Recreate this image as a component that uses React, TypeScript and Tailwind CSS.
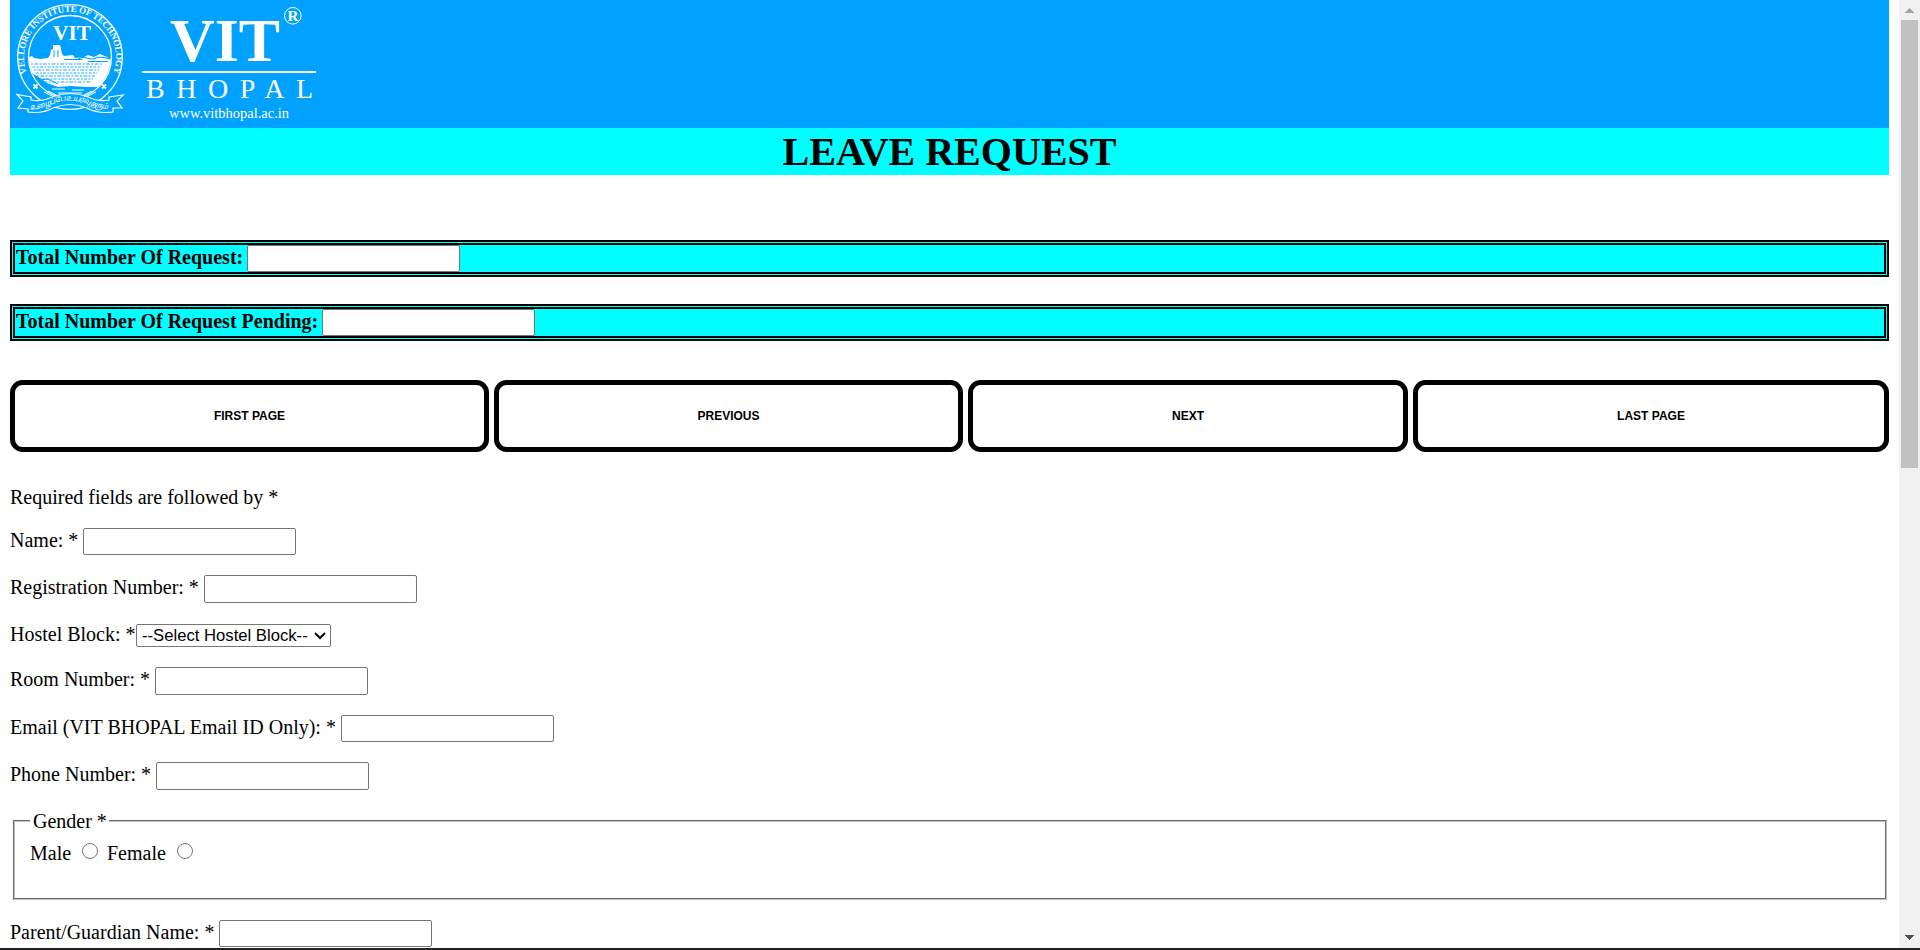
import React from 'react';

function Logo() {
  const rows = [64, 67, 70, 73, 76, 79, 82];
  return (
    <svg width="320" height="128" viewBox="10 0 320 128" className="block shrink-0">
      <defs>
        <path id="ringPath" d="M 26.6 73 A 46 46 0 1 1 113.4 73" />
        <path id="ribbonPath" d="M 30 109.5 Q 42 109 54 103.5 Q 70 97.5 86 103.5 Q 98 109 110 109.5" />
        <clipPath id="innerDisc"><circle cx="70" cy="57" r="41" /></clipPath>
      </defs>
      <g fill="none" stroke="#fff" strokeWidth="1.3">
        <circle cx="70" cy="57" r="52.3" />
        <circle cx="70" cy="57" r="41.5" />
      </g>
      <text fill="#fff" fontFamily="Liberation Serif, serif" fontWeight="700" fontSize="9">
        <textPath href="#ringPath" startOffset="0" textLength="175" lengthAdjust="spacingAndGlyphs">VELLORE INSTITUTE OF TECHNOLOGY</textPath>
      </text>
      <text x="72" y="39.5" textAnchor="middle" fill="#fff" fontFamily="Liberation Serif, serif" fontWeight="700" fontSize="21" textLength="38" lengthAdjust="spacingAndGlyphs">VIT</text>
      <g clipPath="url(#innerDisc)">
        <path fill="#fff" d="M28 61 L29 57 L32 56 L34 58 L40 59 L48 58 L50 55 L51 50 L53 49 L53 45 L60 45 L61 49 L62 54 L64 56 L73 55 L75 58 L84 57 L88 55 L94 57 L100 54 L107 57 L112 60 L111 72 L106 80 L98 87 L86 87 L70 86 L58 87 L47 83 L40 78 L30 72Z" />
        <g stroke="#00a1ff" fill="none">
          <path strokeWidth="1.1" d="M78 59 Q83 56 87 58 Q92 60 96 58 Q101 56 110 59 M64 59.5 H82 M88 61.5 H108" />
          {rows.map((y, i) => (
            <path key={y} d={`M${31 + i * 1.5} ${y} H${103 - i * 2}`} strokeWidth="0.9" strokeDasharray={i % 2 ? '3 1.3 2 1.3' : '2 1.3 4 1.3'} />
          ))}
          <path strokeWidth="1" d="M39 80 L48 79 L58 84 M54 50 V57 M58 50 V57" />
        </g>
        <path stroke="#fff" strokeWidth="1" d="M52 89 H65 M72 90 H84 M58 93 H82" />
      </g>
      <path fill="none" stroke="#fff" strokeWidth="1" d="M44 92 L54 97 M48 91 L58 96 M96 92 L86 97 M92 91 L82 96" />
      <g stroke="#fff" strokeWidth="1.8">
        <path d="M33.5 84.500 L37.500 88.500 M37.500 84.500 L33.500 88.500 M102 84.500 L106 88.500 M106 84.500 L102 88.500" />
      </g>
      <path fill="#00a1ff" stroke="#fff" strokeWidth="1.2" d="M31 97 L17 94.5 L23 101 L18 108 L28 109 L28 112 Q42 114 53 108 Q70 101 87 108 Q98 114 113 112 L113 108 L122 108 L117 101 L123 95 L109 97 L109 100 Q98 102 88 97 Q70 90 52 97 Q42 102 31 100Z" />
      <text fill="#fff" fontSize="7.5" fontStyle="italic" fontFamily="Noto Sans Tamil, Noto Sans, sans-serif">
        <textPath href="#ribbonPath" startOffset="0" textLength="80">உழைப்பே உயர்வு தரும்</textPath>
      </text>
      <g fill="#fff" fontFamily="Liberation Serif, serif">
        <text x="170" y="60.5" fontWeight="700" fontSize="62" textLength="110" lengthAdjust="spacingAndGlyphs">VIT</text>
        <text x="293" y="20.5" textAnchor="middle" fontWeight="700" fontSize="15">R</text>
        <text x="146" y="97.5" fontSize="28" textLength="167">BHOPAL</text>
        <text x="169" y="118" fontSize="15" textLength="120" lengthAdjust="spacingAndGlyphs">www.vitbhopal.ac.in</text>
        <rect x="142" y="71" width="174" height="2" />
      </g>
      <circle cx="292.8" cy="15.8" r="8.3" fill="none" stroke="#fff" strokeWidth="1" />
    </svg>
  );
}

function TextInput({ height = 'h-[27px]' }: { height?: string }) {
  return <input type="text" className={`block ${height} w-[213px] shrink-0 rounded-[2px] border border-[#767676] bg-white outline-none`} />;
}

function Total({ label, width }: { label: string; width: string }) {
  return (
    <div className="flex h-[37px] items-start border-[5px] border-double border-black bg-[#00ffff] text-[20px] font-bold">
      <label className={`${width} shrink-0 whitespace-nowrap pl-px leading-[25px]`}>{label}</label>
      <TextInput />
    </div>
  );
}

function Field({ label, width, className, height }: { label: string; width: string; className: string; height?: string }) {
  return (
    <div className={`flex h-[27px] ${className}`}>
      <label className={`${width} shrink-0 whitespace-nowrap leading-[25px]`}>{label}</label>
      <TextInput height={height} />
    </div>
  );
}

function PageButton({ children, width }: { children: string; width: string }) {
  return (
    <button className={`h-[72px] ${width} rounded-[12.5px] border-[5px] border-black bg-white font-['Liberation_Sans',sans-serif] text-[12px] font-bold`}>
      {children}
    </button>
  );
}

function Scrollbar() {
  return (
    <div className="flex w-[21px] shrink-0 flex-col items-center justify-between bg-[#f1f1f1]">
      <div className="flex flex-col items-center">
        <svg width="21" height="20" viewBox="0 0 21 20" shapeRendering="crispEdges"><path d="M10.500 8 L15 13 H6Z" fill="#a3a3a3" /></svg>
        <div className="h-[448px] w-[17px] bg-[#c1c1c1]" />
      </div>
      <svg width="21" height="20" viewBox="0 0 21 20" shapeRendering="crispEdges"><path d="M6 7 H15 L10.500 12Z" fill="#505050" /></svg>
    </div>
  );
}

export default function App() {
  return (
    <div className="flex h-[950px] w-full flex-col overflow-hidden bg-white font-['Liberation_Serif',serif] text-[20px] text-black">
      <div className="flex h-[948px] overflow-hidden">
        <main className="min-w-0 flex-1 px-[10px]">
          <header className="h-[128px] bg-[#00a1ff]"><Logo /></header>
          <h1 className="h-[47px] bg-[#00ffff] text-center text-[40px] font-bold leading-[47px]">LEAVE REQUEST</h1>
          <div className="mt-[65px] flex flex-col gap-[27px]">
            <Total label="Total Number Of Request:" width="w-[232px]" />
            <Total label="Total Number Of Request Pending:" width="w-[307px]" />
          </div>
          <nav className="mt-[39px] flex gap-[5px]">
            <PageButton width="w-[479px]">FIRST PAGE</PageButton>
            <PageButton width="w-[469px]">PREVIOUS</PageButton>
            <PageButton width="w-[440px]">NEXT</PageButton>
            <PageButton width="w-[476px]">LAST PAGE</PageButton>
          </nav>
          <form>
            <p className="mt-[34px] leading-[23px]">Required fields are followed by *</p>
            <Field label="Name: *" width="w-[73px]" className="mt-[19px]" />
            <Field label="Registration Number: *" width="w-[194px]" className="mt-[20px]" height="h-[28px]" />
            <div className="mt-[22px] flex h-[23px]">
              <label className="w-[126px] shrink-0 whitespace-nowrap leading-[21px]">Hostel Block: *</label>
              <div className="grid">
                <select className="col-start-1 row-start-1 h-[23px] w-[195px] appearance-none rounded-[2px] border border-[#767676] bg-white pl-[5px] font-['Liberation_Sans',sans-serif] text-[16.67px] leading-[21px]">
                  <option>--Select Hostel Block--</option>
                </select>
                <svg width="12" height="8" viewBox="0 0 12 8" className="pointer-events-none col-start-1 row-start-1 mr-[5px] self-center justify-self-end">
                  <path d="M1 1 L6 6 L11 1" fill="none" stroke="#000" strokeWidth="2" />
                </svg>
              </div>
            </div>
            <Field label="Room Number: *" width="w-[145px]" className="mt-[20px]" height="h-[28px]" />
            <Field label="Email (VIT BHOPAL Email ID Only): *" width="w-[331px]" className="mt-[21px]" />
            <Field label="Phone Number: *" width="w-[146px]" className="mt-[20px]" height="h-[28px]" />
            <fieldset className="ml-[3px] mr-[2px] mt-[21px] h-[90px] border-2 border-[#c0c0c0] px-[15px] [border-style:groove]">
              <legend className="h-[22px] pl-[3px] pr-[2px] leading-[22px]">Gender *</legend>
              <div className="mt-[8px] flex h-[23px] items-start">
                <label className="w-[52px] leading-[27px]">Male</label>
                <input type="radio" name="gender" className="mt-[3px] h-4 w-4 appearance-none rounded-full border border-[#767676]" />
                <label className="ml-[9px] w-[70px] leading-[27px]">Female</label>
                <input type="radio" name="gender" className="mt-[3px] h-4 w-4 appearance-none rounded-full border border-[#767676]" />
              </div>
            </fieldset>
            <Field label="Parent/Guardian Name: *" width="w-[209px]" className="mt-[20px]" />
          </form>
        </main>
        <Scrollbar />
      </div>
      <div className="h-[2px] bg-[#222]" />
    </div>
  );
}
